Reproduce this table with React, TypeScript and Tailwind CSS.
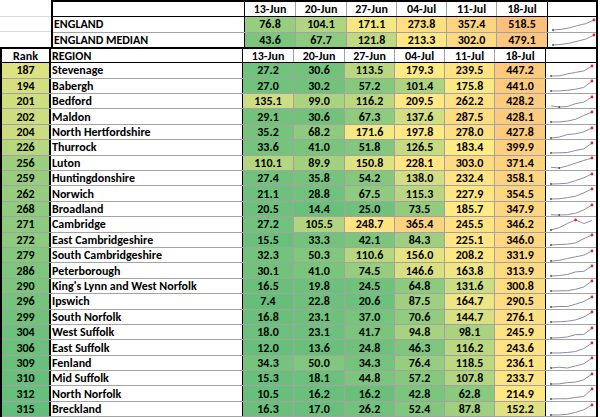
import React from "react";

type Row = { rank: number; name: string; v: number[] };

const rows: Row[] = [
  { rank: 187, name: "Stevenage", v: [27.2, 30.6, 113.5, 179.3, 239.5, 447.2] },
  { rank: 194, name: "Babergh", v: [27.0, 30.2, 57.2, 101.4, 175.8, 441.0] },
  { rank: 201, name: "Bedford", v: [135.1, 99.0, 116.2, 209.5, 262.2, 428.2] },
  { rank: 202, name: "Maldon", v: [29.1, 30.6, 67.3, 137.6, 287.5, 428.1] },
  { rank: 204, name: "North Hertfordshire", v: [35.2, 68.2, 171.6, 197.8, 278.0, 427.8] },
  { rank: 226, name: "Thurrock", v: [33.6, 41.0, 51.8, 126.5, 183.4, 399.9] },
  { rank: 256, name: "Luton", v: [110.1, 89.9, 150.8, 228.1, 303.0, 371.4] },
  { rank: 259, name: "Huntingdonshire", v: [27.4, 35.8, 54.2, 138.0, 232.4, 358.1] },
  { rank: 262, name: "Norwich", v: [21.1, 28.8, 67.5, 115.3, 227.9, 354.5] },
  { rank: 268, name: "Broadland", v: [20.5, 14.4, 25.0, 73.5, 185.7, 347.9] },
  { rank: 271, name: "Cambridge", v: [27.2, 105.5, 248.7, 365.4, 245.5, 346.2] },
  { rank: 272, name: "East Cambridgeshire", v: [15.5, 33.3, 42.1, 84.3, 225.1, 346.0] },
  { rank: 279, name: "South Cambridgeshire", v: [32.3, 50.3, 110.6, 156.0, 208.2, 331.9] },
  { rank: 286, name: "Peterborough", v: [30.1, 41.0, 74.5, 146.6, 163.8, 313.9] },
  { rank: 290, name: "King's Lynn and West Norfolk", v: [16.5, 19.8, 24.5, 64.8, 131.6, 300.8] },
  { rank: 296, name: "Ipswich", v: [7.4, 22.8, 20.6, 87.5, 164.7, 290.5] },
  { rank: 299, name: "South Norfolk", v: [16.8, 23.1, 37.0, 70.6, 144.7, 276.1] },
  { rank: 304, name: "West Suffolk", v: [18.0, 23.1, 41.7, 94.8, 98.1, 245.9] },
  { rank: 306, name: "East Suffolk", v: [12.0, 13.6, 24.8, 46.3, 116.2, 243.6] },
  { rank: 309, name: "Fenland", v: [34.3, 50.0, 34.3, 76.4, 118.5, 236.1] },
  { rank: 310, name: "Mid Suffolk", v: [15.3, 18.1, 44.8, 57.2, 107.8, 233.7] },
  { rank: 312, name: "North Norfolk", v: [10.5, 16.2, 16.2, 42.8, 62.8, 214.9] },
  { rank: 315, name: "Breckland", v: [16.3, 17.0, 26.2, 52.4, 87.8, 152.2] },
];

const england = [76.8, 104.1, 171.1, 273.8, 357.4, 518.5];
const median = [43.6, 67.7, 121.8, 213.3, 302.0, 479.1];
const dates = ["13-Jun", "20-Jun", "27-Jun", "04-Jul", "11-Jul", "18-Jul"];

const G = [99, 190, 123];
const Y = [255, 235, 132];
const R = [248, 105, 107];
const mix = (a: number[], b: number[], t: number) =>
  `rgb(${a.map((x, i) => Math.round(x + (b[i] - x) * t)).join(",")})`;

function valColor(v: number) {
  const mid = 180;
  if (v <= mid) return mix(G, Y, Math.pow(v / mid, 1.3));
  return mix(Y, R, Math.min(1, (v - mid) / 1020));
}
function rankColor(r: number) {
  const t = Math.max(0, Math.min(1, (r - 150) / 165));
  return mix(Y, G, t);
}

const valW = ["w-[51px]", "w-[51px]", "w-[50px]", "w-[50px]", "w-[50px]", "w-[51px]"];

function Spark({ v }: { v: number[] }) {
  const min = Math.min(...v);
  const max = Math.max(...v);
  const pts = v.map((x, i) => [5 + i * 8.2, 13 - ((x - min) / (max - min)) * 10]);
  const hi = v.indexOf(max);
  const lo = v.indexOf(min);
  return (
    <svg width="48" height="15" className="block">
      <polyline
        points={pts.map((p) => p.join(",")).join(" ")}
        fill="none"
        stroke="#8a8fa0"
        strokeWidth="1"
      />
      <circle cx={pts[lo][0]} cy={pts[lo][1]} r="0.9" fill="#3f4a5a" />
      <circle cx={pts[hi][0]} cy={pts[hi][1]} r="1.4" fill="#e8202a" />
    </svg>
  );
}

function ValueCells({ v }: { v: number[] }) {
  return (
    <>
      {v.map((x, i) => (
        <div
          key={i}
          className={`${valW[i]} shrink-0 h-full flex items-center justify-center border-r ${
            i === 5 ? "border-black" : "border-[#a3a3a3]"
          }`}
          style={{ backgroundColor: valColor(x) }}
        >
          {x.toFixed(1)}
        </div>
      ))}
    </>
  );
}

function DateCells() {
  return (
    <>
      {dates.map((d, i) => (
        <div
          key={d}
          className={`${valW[i]} shrink-0 h-full flex items-center justify-center border-r ${
            i === 5 ? "border-black" : "border-[#a3a3a3]"
          }`}
        >
          {d}
        </div>
      ))}
    </>
  );
}

export default function App() {
  return (
    <div
      className="w-[600px] h-[417px] bg-white overflow-hidden text-black font-bold text-[12px] leading-none"
      style={{ fontFamily: "Carlito, Lato, 'Liberation Sans', sans-serif" }}
    >
      {/* top block */}
      <div className="flex">
        <div className="w-[51px] shrink-0">
          <div className="h-[17px] border-b border-[#dadada]" />
          <div className="h-[15.3px] border-b border-[#dadada]" />
        </div>
        <div className="w-[547px] shrink-0 border-2 border-b-0 border-black">
          <div className="flex h-[15.3px] border-b border-black">
            <div className="w-[192px] shrink-0 h-full border-r border-black" />
            <DateCells />
            <div className="w-[48px] shrink-0" />
          </div>
          <div className="flex h-[15.3px] border-b border-[#a3a3a3]">
            <div className="w-[192px] shrink-0 h-full border-r border-black flex items-center pl-[1px]">
              ENGLAND
            </div>
            <ValueCells v={england} />
            <div className="w-[48px] shrink-0 flex items-center">
              <Spark v={england} />
            </div>
          </div>
          <div className="flex h-[14.4px]">
            <div className="w-[192px] shrink-0 h-full border-r border-black flex items-center pl-[1px]">
              ENGLAND MEDIAN
            </div>
            <ValueCells v={median} />
            <div className="w-[48px] shrink-0 flex items-center">
              <Spark v={median} />
            </div>
          </div>
        </div>
      </div>
      {/* main block */}
      <div className="w-[598px] border-2 border-black">
        <div className="flex h-[14.3px] border-b border-black">
          <div className="w-[49px] shrink-0 h-full border-r-2 border-black flex items-center justify-center">
            Rank
          </div>
          <div className="w-[192px] shrink-0 h-full border-r border-black flex items-center pl-[1px]">
            REGION
          </div>
          <DateCells />
          <div className="w-[48px] shrink-0" />
        </div>
        {rows.map((r) => (
          <div key={r.rank} className="flex h-[15.4px] border-b border-[#a3a3a3]">
            <div
              className="w-[49px] shrink-0 h-full border-r-2 border-black flex items-center justify-center"
              style={{ backgroundColor: rankColor(r.rank) }}
            >
              {r.rank}
            </div>
            <div className="w-[192px] shrink-0 h-full border-r border-black flex items-center pl-[1px]">
              {r.name}
            </div>
            <ValueCells v={r.v} />
            <div className="w-[48px] shrink-0 flex items-center">
              <Spark v={r.v} />
            </div>
          </div>
        ))}
      </div>
    </div>
  );
}
